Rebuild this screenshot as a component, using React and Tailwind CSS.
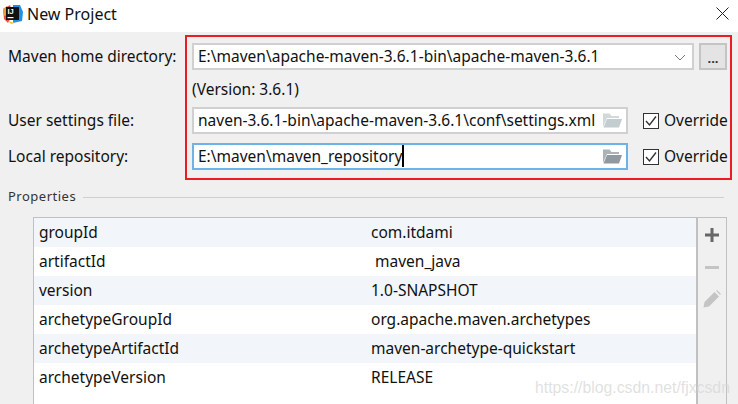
import React from 'react'

const font = { fontFamily: '"Noto Sans", sans-serif' }

const rows = [
    ['groupId', 'com.itdami'],
    ['artifactId', '\u00a0maven_java'],
    ['version', '1.0-SNAPSHOT'],
    ['archetypeGroupId', 'org.apache.maven.archetypes'],
    ['archetypeArtifactId', 'maven-archetype-quickstart'],
    ['archetypeVersion', 'RELEASE'],
]

function Logo() {
    return (
        <svg width="20" height="20" viewBox="0 0 20 20" className="shrink-0">
            <path d="M0 5 L7 1 L10 10 L5 19 L1 15 Z" fill="#f0513c" />
            <path d="M0 5 L4 2 L4 11 L1 12 Z" fill="#f59a3c" />
            <path d="M10 1 L17 1 L20 8 L19 17 L10 19 Z" fill="#1f8fe8" />
            <path d="M5 17 L12 19 L8 20 Z" fill="#f7c52c" />
            <rect x="3" y="3" width="13" height="13" fill="#111" />
            <text x="4.5" y="10" fontSize="7.5" fontWeight="700" fill="#fff" fontFamily="Liberation Sans">IJ</text>
            <rect x="4.5" y="13" width="6" height="1.2" fill="#fff" />
        </svg>
    )
}

function Folder({ color }) {
    return (
        <svg width="20" height="15" viewBox="0 0 20 15" className="shrink-0">
            <path d="M1 0.5 H7.5 L9.5 3 H17 V5 H5 L1 14 Z" fill={color} opacity="0.75" />
            <path d="M5 6 H20 L17 14.5 H1.5 Z" fill={color} />
        </svg>
    )
}

function Override() {
    return (
        <label className="ml-[15px] flex items-center gap-[5px] text-[15.5px] text-[#111]">
            <span className="flex h-[16px] w-[16px] items-center justify-center border border-[#333] bg-white">
                <svg width="12" height="12" viewBox="0 0 12 12" fill="none" stroke="#333" strokeWidth="1.4">
                    <path d="M1 6 L4.5 10 L11 1.5" />
                </svg>
            </span>
            Override
        </label>
    )
}

function Row({ label, children, className }) {
    return (
        <div className={`flex h-[27px] items-center pl-2 ${className}`}>
            <span className="w-[184px] shrink-0 pt-px text-[15.5px] text-[#111]">{label}</span>
            {children}
        </div>
    )
}

export default function App() {
    return (
        <div className="relative flex h-[404px] w-[738px] flex-col overflow-hidden bg-[#f0f0f0]" style={font}>
            <div className="flex h-8 shrink-0 items-center bg-white pb-[5px] pl-[3px] pr-[9px]">
                <Logo />
                <span className="ml-[4px] flex-1 text-[16px] text-[#111]">New Project</span>
                <svg width="13" height="13" viewBox="0 0 13 13" stroke="#222" strokeWidth="1">
                    <path d="M0.5 0.5 L12.5 12.5 M12.5 0.5 L0.5 12.5" />
                </svg>
            </div>

            <Row label="Maven home directory:" className="mt-[11px]">
                <div className="flex h-[27px] w-[502px] items-center border-2 border-[#d0d0d0] bg-white pl-[4px] pr-[6px] pt-px text-[15.5px] text-[#111]">
                    <span className="flex-1">E:\maven\apache-maven-3.6.1-bin\apache-maven-3.6.1</span>
                    <svg width="12" height="7" viewBox="0 0 12 7" fill="none" stroke="#777" strokeWidth="1">
                        <path d="M1 1 L6 6 L11 1" />
                    </svg>
                </div>
                <button className="ml-[5px] h-[27px] w-[28px] border-2 border-[#c4c4c4] bg-[#e4e4e4] pt-[3px] text-[13px] font-bold leading-none text-[#333]">...</button>
            </Row>
            <div className="flex h-[37px] items-center pl-[192px] pt-[2px] text-[15.5px] text-[#111]">(Version: 3.6.1)</div>
            <Row label="User settings file:">
                <div className="flex h-[27px] w-[436px] items-center border-2 border-[#d0d0d0] bg-white pl-[4px] pr-[4px] text-[15.5px] text-[#111]">
                    <span className="flex-1 whitespace-nowrap">naven-3.6.1-bin\apache-maven-3.6.1\conf\settings.xml</span>
                    <Folder color="#c3cccf" />
                </div>
                <Override />
            </Row>
            <Row label="Local repository:" className="mt-[9px]">
                <div className="flex h-[27px] w-[436px] items-center border-2 border-[#6db3e8] bg-white pl-[4px] pr-[4px] text-[15.5px] text-[#111]">
                    <span className="flex-1"><span className="border-r-2 border-black">E:\maven\maven_repository</span></span>
                    <Folder color="#8f999f" />
                </div>
                <Override />
            </Row>

            <div className="mt-[17px] flex h-[20px] items-center pl-2 pr-[14px]">
                <span className="text-[13px] tracking-[0.5px] text-[#333]">Properties</span>
                <div className="ml-[7px] h-px flex-1 bg-[#cfcfcf]" />
            </div>

            <div className="ml-[33px] mr-[11px] mt-[10px] flex flex-1 border border-b-0 border-[#c0c0c0]">
                <div className="flex-1 bg-white">
                    {rows.map(([key, value], i) => (
                        <div key={key} className={`flex h-[29px] items-center pl-[5px] text-[15.5px] text-[#111] ${i % 2 === 0 ? 'bg-[#f2f5f9]' : 'bg-white'}`}>
                            <span className="w-[332px] shrink-0">{key}</span>
                            <span>{value}</span>
                        </div>
                    ))}
                </div>
                <div className="flex w-[30px] shrink-0 flex-col items-center border-l-2 border-[#c0c0c0] pt-[10px]">
                    <svg width="14" height="14" viewBox="0 0 14 14" fill="#666">
                        <path d="M5.5 0 H8.5 V5.5 H14 V8.5 H8.5 V14 H5.5 V8.5 H0 V5.5 H5.5 Z" />
                    </svg>
                    <svg width="14" height="3" viewBox="0 0 14 3" fill="#c4c4c4" className="mt-[24px]">
                        <rect width="14" height="3" />
                    </svg>
                    <svg width="18" height="18" viewBox="0 0 18 18" fill="#c4c4c4" className="mt-[21px]">
                        <path d="M0.5 17.5 L1.5 12 L11.5 2 L16 6.5 L6 16.5 Z M13 0.8 L14.2 0.2 L17.8 3.8 L17.2 5 Z" />
                    </svg>
                </div>
            </div>

            <div className="absolute left-[185px] top-[35px] h-[145px] w-[547px] border-2 border-[#ed1c24]" />
            <span className="absolute left-[535px] top-[376px] text-[15.8px] text-[#d9d9d9]/80" style={{ fontFamily: '"Liberation Sans", sans-serif' }}>https://blog.csdn.net/fjxcsdn</span>
        </div>
    )
}
